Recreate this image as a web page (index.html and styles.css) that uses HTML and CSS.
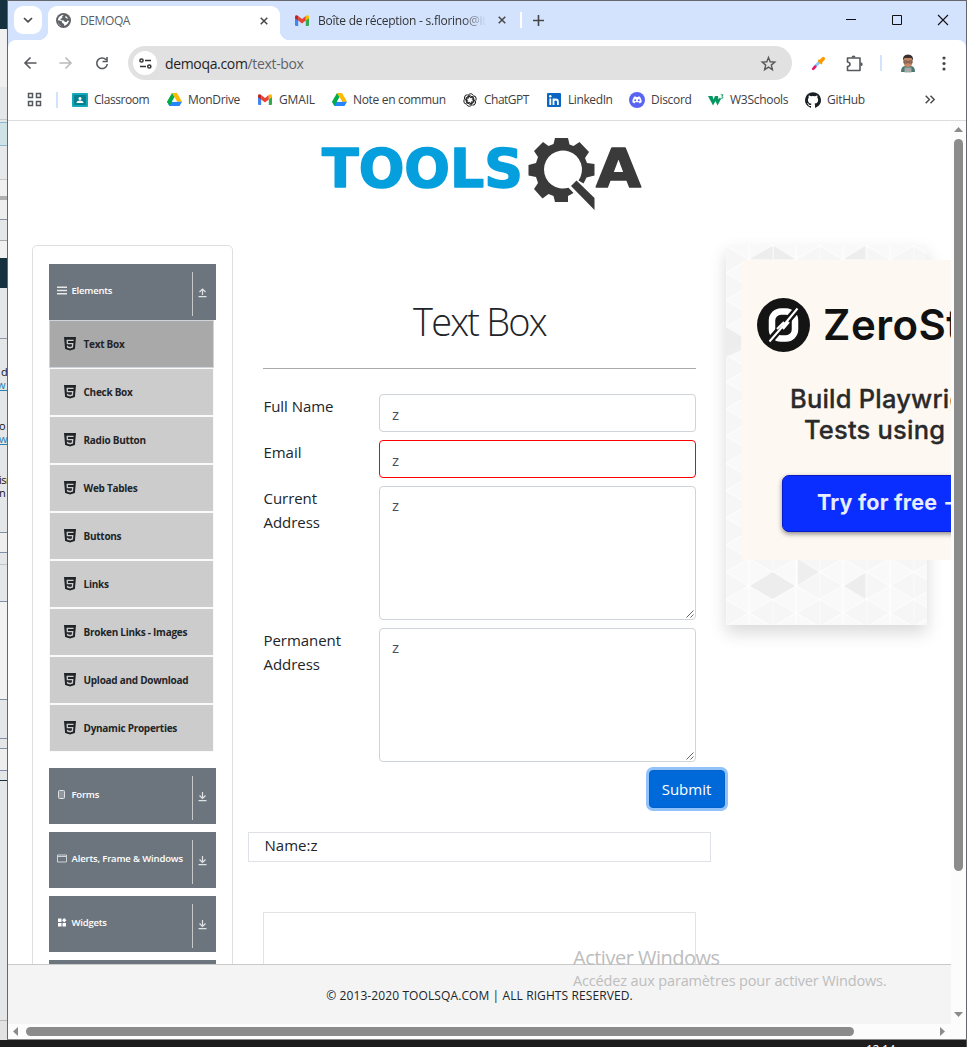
FILE: index.html
```html
<!DOCTYPE html>
<html lang="fr">
<head>
<meta charset="utf-8">
<title>DEMOQA</title>
<link rel="stylesheet" href="styles.css">
</head>
<body>
<svg class="defs" width="0" height="0">
  <defs>
    <symbol id="html5" viewBox="0 0 12 14"><path fill="#212529" d="M0 0h12l-1.1 12L6 13.6 1.1 12z"/><path fill="none" stroke="#ccc" stroke-width="1.300" d="M9.600 3.400H3.200l.2 3.200h5.300l-.3 3.300L6 10.700l-2.400-.8-.1-1.200"/></symbol>
    <symbol id="down" viewBox="0 0 9 10"><path d="M4.500 0v6M1.500 3.500l3 3 3-3M.5 8.700h8" fill="none" stroke="#dfe2e5" stroke-width="1.200"/></symbol>
    <symbol id="up" viewBox="0 0 9 10"><path d="M4.500 7V1.500M1.500 4l3-3 3 3M.5 8.700h8" fill="none" stroke="#dfe2e5" stroke-width="1.200"/></symbol>
    <symbol id="gmail" viewBox="0 0 14 11"><path fill="#4285f4" d="M0 2v8q0 1 1 1h2.200V4.500z"/><path fill="#34a853" d="M14 2v8q0 1-1 1h-2.200V4.500z"/><path fill="#ea4335" d="M3.200 1v4.500L7 8.400l3.800-2.900V1L7 3.900z"/><path fill="#c5221f" d="M0 1.700v1.500l3.200 2.300V1L2.500.5Q.2-.4 0 1.700z"/><path fill="#fbbc04" d="M14 1.700v1.500l-3.200 2.300V1l.7-.5q2.300-.9 2.500 1.200z"/></symbol>
    <symbol id="drive" viewBox="0 0 15 13"><path fill="#ffba00" d="M5 0h5l5 8.700h-5L5 0z"/><path fill="#2684fc" d="M0 8.700h15L12.500 13h-10z"/><path fill="#00ac47" d="M5 0l2.500 4.300L2.500 13 0 8.700z"/><path fill="#fff" d="M7.500 4.300L10 8.700H5z"/></symbol>
    <symbol id="close" viewBox="0 0 8 8"><path d="M.7.7l6.600 6.600M7.300.7L.7 7.300" stroke="#474747" stroke-width="1.500"/></symbol>
    <symbol id="grip" viewBox="0 0 8 8"><path d="M.5 7.500l7-7M4.500 7.500l3-3" stroke="#555" stroke-width=".9"/></symbol>
  </defs>
</svg>
<div class="desktop">
  <div class="behind">
    <span class="frag f1">d</span><span class="frag f2 link">w i</span><span class="frag f3">o</span><span class="frag f4 link">w</span><span class="frag f5">isr</span><span class="frag f6">n</span>
  </div>
  <div class="window">
    <div class="tabstrip">
      <div class="tabsearch"><svg width="10" height="6" viewBox="0 0 10 6"><path d="M1 1l4 3.800L9 1" fill="none" stroke="#474747" stroke-width="1.700"/></svg></div>
      <div class="tab active">
        <svg width="15" height="15" viewBox="0 0 16 16"><circle cx="8" cy="8" r="8" fill="#5f6368"/><path fill="#fff" d="M8.500 1.800l-2 2 .2 1.500-2.200 1.200 1 1.200 2.800.2 1.200 1.600h2l.5-1.500 2 .5Q13 12 9 13.800l-.5-2-2-1.500-.3-1.500L2 7.500Q1.500 12 6 14.200 1.800 13 1.900 8 2.500 2.500 8.500 1.800zM10.500 3l2.700 3-2.200-.3-1.300-1.200z"/></svg>
        <span class="tabtitle t1">DEMOQA</span>
        <svg class="x" width="8" height="8"><use href="#close"/></svg>
      </div>
      <div class="tab second">
        <svg width="14" height="11"><use href="#gmail"/></svg>
        <span class="tabtitle t2">Boîte de réception - s.florino@it</span>
        <svg class="x" width="8" height="8"><use href="#close"/></svg>
      </div>
      <span class="tabsep"></span>
      <svg class="plus" width="11" height="11" viewBox="0 0 11 11"><path d="M5.500 0v11M0 5.500h11" stroke="#474747" stroke-width="1.600"/></svg>
      <svg class="controls" width="104" height="12" viewBox="0 0 104 12"><path d="M0 5.500h10M92 1l10 10M102 1l-10 10" stroke="#111" stroke-width="1.100"/><path d="M46.500 1.500h9v9h-9z" fill="none" stroke="#111"/></svg>
    </div>
    <div class="toolbar">
      <svg class="nav" width="86" height="14" viewBox="0 0 86 14"><path d="M13.500 7H2M7.500 1.500L2 7 7.500 12.500" fill="none" stroke="#55585c" stroke-width="1.600"/><path d="M36.500 7H48M42.500 1.500L48 7 42.500 12.500" fill="none" stroke="#bbb" stroke-width="1.600"/><path d="M83 3.700A5.300 5.300 0 1 0 84.300 8M84 1v4.500h-4.500" fill="none" stroke="#55585c" stroke-width="1.600"/></svg>
      <div class="omnibox">
        <span class="siteinfo"><svg width="13" height="11" viewBox="0 0 13 11"><g fill="none" stroke="#333" stroke-width="1.500"><circle cx="2.500" cy="2.500" r="1.600"/><path d="M6 2.500h6M1 8.500h6"/><circle cx="10.300" cy="8.500" r="1.600"/></g></svg></span>
        <span class="url">demoqa.com<i>/text-box</i></span>
        <svg class="star" width="15" height="15" viewBox="0 0 15 15"><path d="M7.500 1.500l1.700 4.300 4.600.3-3.500 3 1.100 4.500-3.900-2.500-3.900 2.500 1.100-4.500-3.500-3 4.600-.3z" fill="none" stroke="#5a5a5a" stroke-width="1.400"/></svg>
      </div>
      <svg class="picker" width="15" height="15" viewBox="0 0 15 15"><path d="M9.500 5L3 11.500" stroke="#8ac9f7" stroke-width="2.800"/><path d="M4.300 10.700L2.200 12.800" stroke="#f0136b" stroke-width="2.600" stroke-linecap="round"/><path d="M7.300 4l3.700 3.700" stroke="#f90" stroke-width="2"/><path d="M9.500 5.500L12.300 2.700" stroke="#f90" stroke-width="3.600" stroke-linecap="round"/></svg>
      <svg class="puzzle" width="17" height="17" viewBox="0 0 17 17"><path d="M1.500 3H14V15.500H1.500v-4q2.500-.3 2.500-2.200T1.500 7z" fill="none" stroke="#55585c" stroke-width="1.600" stroke-linejoin="round"/><path d="M5.500 2.500q0-2 2-2t2 2zM14.500 7.200q2.200 0 2.200 2t-2.200 2z" fill="#55585c"/></svg>
      <span class="toolsep"></span>
      <svg class="avatar" width="16" height="19" viewBox="0 0 16 19"><path d="M1 18q0-6 4-6h6q4 0 4 6z" fill="#4d7770"/><path d="M3.500 4h9v4q0 5-4.500 5T3.500 8z" fill="#c58766"/><path d="M3.200 7Q2 .5 8 .5T12.800 7L11.500 4h-7z" fill="#3b302e"/><path d="M4 7h3.200v2H4zM8.800 7H12v2H8.800z" fill="none" stroke="#5d4a48" stroke-width=".8"/><path d="M4.500 13.500h7v5h-7z" fill="#9caaa9"/><circle cx="8" cy="16" r="1" fill="#d2a08a"/></svg>
      <svg class="dots" width="4" height="15" viewBox="0 0 4 15"><g fill="#474747"><circle cx="2" cy="2" r="1.600"/><circle cx="2" cy="7.500" r="1.600"/><circle cx="2" cy="13" r="1.600"/></g></svg>
    </div>
    <div class="bookmarks">
      <svg class="apps" width="15" height="15" viewBox="0 0 15 15"><path d="M1.500 1.500h4v4h-4zM9.500 1.500h4v4h-4zM1.500 9.500h4v4h-4zM9.500 9.500h4v4h-4z" fill="none" stroke="#55585c" stroke-width="1.500"/></svg>
      <span class="bmsep"></span>
      <div class="bm b1"><svg width="16" height="14" viewBox="0 0 16 14"><rect width="16" height="14" rx="1" fill="#12a8b8"/><rect x="2" y="2" width="12" height="10" fill="#087f91"/><circle cx="8" cy="5.500" r="1.500" fill="#fff"/><path d="M4.500 10q0-2.500 3.500-2.500t3.500 2.500z" fill="#fff"/></svg><span>Classroom</span></div>
      <div class="bm b2"><svg width="15" height="13"><use href="#drive"/></svg><span>MonDrive</span></div>
      <div class="bm b3"><svg width="14" height="11"><use href="#gmail"/></svg><span>GMAIL</span></div>
      <div class="bm b4"><svg width="15" height="13"><use href="#drive"/></svg><span>Note en commun</span></div>
      <div class="bm b5"><svg width="14" height="14" viewBox="0 0 14 14"><g fill="none" stroke="#222" stroke-width="1"><path id="petal" d="M5 6V3.200Q5.300.8 7.500.7q2 0 2.800 1.600M5 4.500L7.500 3l3.500 2"/><use href="#petal" transform="rotate(60 7 7)"/><use href="#petal" transform="rotate(120 7 7)"/><use href="#petal" transform="rotate(180 7 7)"/><use href="#petal" transform="rotate(240 7 7)"/><use href="#petal" transform="rotate(300 7 7)"/></g></svg><span>ChatGPT</span></div>
      <div class="bm b6"><svg width="14" height="14" viewBox="0 0 14 14"><rect width="14" height="14" rx="1" fill="#0a66c2"/><circle cx="3.300" cy="3.200" r="1.200" fill="#fff"/><path d="M3.300 5.500V12M6.500 12V5.500M6.500 8.500q0-2 2.200-2t2.200 2.200V12" fill="none" stroke="#fff" stroke-width="1.800"/></svg><span>LinkedIn</span></div>
      <div class="bm b7"><svg width="16" height="16" viewBox="0 0 16 16"><circle cx="8" cy="8" r="8" fill="#5865f2"/><path d="M5 4.700l1.500-.5.400.8h2.200l.4-.8 1.500.5q1.800 2.800 1.600 5.500l-2 1.200-.7-1.200H6.100l-.7 1.200-2-1.200Q3.200 7.500 5 4.700z" fill="#fff"/><circle cx="6.200" cy="8.200" r="1" fill="#5865f2"/><circle cx="9.800" cy="8.200" r="1" fill="#5865f2"/></svg><span>Discord</span></div>
      <div class="bm b8"><svg width="16" height="12" viewBox="0 0 16 12"><path d="M0 2h4.500l1 3.500L7 2h3l.5 3.500L12 3.500l1 1.500-3.500 6.500L7.500 7 5 11.500z" fill="#059862"/><path d="M12.800.8h2.300l-1.300 1.500q1.500.4 1 1.500-.6.900-1.800.400" fill="none" stroke="#059862" stroke-width=".9"/></svg><span>W3Schools</span></div>
      <div class="bm b9"><svg width="16" height="16" viewBox="0 0 16 16"><path fill="#1b1f23" d="M8 .2a8 8 0 0 0-2.530 15.590c.4.070.55-.17.550-.38v-1.490c-2.010.37-2.530-.49-2.690-.94-.09-.23-.48-.94-.82-1.130-.28-.15-.68-.52-.01-.53.63-.01 1.080.58 1.230.82.72 1.210 1.870.87 2.330.66.070-.52.280-.87.510-1.070-1.780-.2-3.640-.89-3.640-3.950 0-.87.310-1.590.82-2.150-.08-.2-.36-1.020.080-2.120 0 0 .670-.21 2.200.82a7.400 7.400 0 0 1 4 0c1.530-1.040 2.200-.82 2.200-.82.440 1.100.160 1.920.080 2.120.510.560.820 1.270.820 2.150 0 3.070-1.870 3.750-3.650 3.950.290.250.540.730.540 1.480v2.200c0 .21.150.46.550.38A8 8 0 0 0 8 .2z"/></svg><span>GitHub</span></div>
      <svg class="more" width="10" height="9" viewBox="0 0 10 9"><path d="M.7.700l3.700 3.800L.7 8.300M5.500.7l3.700 3.800-3.700 3.800" fill="none" stroke="#474747" stroke-width="1.400"/></svg>
    </div>
    <div class="viewrow">
      <div class="page">
        <header class="logo">
          <svg width="324" height="76" viewBox="0 0 324 76">
            <text class="tools" x="2" y="50.500" textLength="201" lengthAdjust="spacingAndGlyphs">TOOLS</text>
            <g fill="#3a3a3a" transform="translate(241.500 34)">
              <path fill-rule="evenodd" d="M-6.500-32H6.500L8-25.500 12-24l6-4L27.500-18 23.500-12l2 5L33-6V5.500L25 7.500l-3 6-5-3A19 19 0 1 0 7 17.700L12 23 6.500 26V32H-6.500L-8 26-13 24l-6 4.500L-27.500 19-23.500 13-25.500 7-33 5.500V-5L-25.500-7-23.500-13-27.500-19-18.500-28-13-24-8-26z"/>
              <path d="M9.500 16L15 10.500 33 28V40z"/>
            </g>
            <text class="qa" x="276" y="50.500" textLength="45" lengthAdjust="spacingAndGlyphs">A</text>
          </svg>
        </header>
        <div class="columns">
          <nav class="sidebar">
            <div class="group first"><svg width="10" height="9" viewBox="0 0 10 9"><path d="M0 1.200h10M0 4.500h10M0 7.800h10" stroke="#e6e8ea" stroke-width="1.500"/></svg><span>Elements</span><i class="toggle"><svg width="9" height="10"><use href="#up"/></svg></i></div>
            <ul class="items">
              <li class="sel"><svg width="12" height="14"><use href="#html5"/></svg><span>Text Box</span></li>
              <li><svg width="12" height="14"><use href="#html5"/></svg><span>Check Box</span></li>
              <li><svg width="12" height="14"><use href="#html5"/></svg><span>Radio Button</span></li>
              <li><svg width="12" height="14"><use href="#html5"/></svg><span>Web Tables</span></li>
              <li><svg width="12" height="14"><use href="#html5"/></svg><span>Buttons</span></li>
              <li><svg width="12" height="14"><use href="#html5"/></svg><span>Links</span></li>
              <li><svg width="12" height="14"><use href="#html5"/></svg><span>Broken Links - Images</span></li>
              <li><svg width="12" height="14"><use href="#html5"/></svg><span>Upload and Download</span></li>
              <li><svg width="12" height="14"><use href="#html5"/></svg><span>Dynamic Properties</span></li>
            </ul>
            <div class="group"><svg width="10" height="9" viewBox="0 0 10 9"><rect x="1.500" y=".5" width="6" height="8" rx="1" fill="#8f969d" stroke="#dfe2e5"/></svg><span>Forms</span><i class="toggle"><svg width="9" height="10"><use href="#down"/></svg></i></div>
            <div class="group"><svg width="10" height="9" viewBox="0 0 10 9"><path d="M.5 1h9v7h-9zM.5 2.500h9" fill="none" stroke="#cfd3d6"/></svg><span class="alerts">Alerts, Frame &amp; Windows</span><i class="toggle"><svg width="9" height="10"><use href="#down"/></svg></i></div>
            <div class="group"><svg width="10" height="9" viewBox="0 0 10 9"><path d="M1 .5h3.500v3.500H1zM1 5h3.500v3.500H1zM5.500 5H9v3.500H5.500zM7.200 0L9.500 2.200 7.200 4.500 5 2.200z" fill="#fff"/></svg><span>Widgets</span><i class="toggle"><svg width="9" height="10"><use href="#down"/></svg></i></div>
            <div class="group"></div>
          </nav>
          <main class="content">
            <h1>Text Box</h1>
            <form class="form">
              <div class="row"><label>Full Name</label><div class="field">z</div></div>
              <div class="row"><label>Email</label><div class="field error">z</div></div>
              <div class="row"><label>Current<br>Address</label><div class="field area">z<svg width="8" height="8"><use href="#grip"/></svg></div></div>
              <div class="row"><label>Permanent<br>Address</label><div class="field area">z<svg width="8" height="8"><use href="#grip"/></svg></div></div>
            </form>
            <div class="submitrow"><button class="submit" type="button">Submit</button></div>
            <div class="output">Name:z</div>
            <div class="adslot"></div>
          </main>
          <aside class="promo">
            <svg class="tiles" width="201" height="380"><defs><pattern id="tri" width="47" height="27.200" patternUnits="userSpaceOnUse" patternTransform="translate(-.5 .8)"><path fill="#f9f9f9" d="M0 0h47v27.200H0z"/><path d="M0 0l23.500 13.600L0 27.200zM47 0v27.200L23.500 13.600z" fill="#f6f6f6"/><path d="M0 0l47 27.200M47 0L0 27.200M0 0v27.200M23.500 0v27.200" fill="none" stroke="#fff" stroke-width="1"/></pattern></defs><rect width="201" height="380" fill="url(#tri)"/><path d="M24 341l22.500-14 22.500 14-22.500 13zM0 82l15 9v14L0 112zM24 13.500L46.500 1v13.500zM48 1l21 13H48zM118 14l21-13v13zM118 341l21-13v26zM72 314v26l21-13z" fill="#e9e9e9" opacity=".75"/></svg>
            <div class="ad">
              <div class="brand"><svg width="53" height="54" viewBox="0 0 53 54"><ellipse cx="26.500" cy="27" rx="26.500" ry="27" fill="#141414"/><rect x="15" y="13.500" width="23" height="27" rx="9" fill="none" stroke="#fff" stroke-width="6.500"/><path d="M10 46L43 8" stroke="#141414" stroke-width="7"/><path d="M12.500 43.500L26 28M26 28L40.500 10.500M20 31l7-7M26 31l6-7" stroke="#fff" stroke-width="2"/></svg><b>ZeroStep</b></div>
              <p class="l1">Build Playwright</p>
              <p class="l2">Tests using AI</p>
              <div class="cta">Try for free →</div>
            </div>
          </aside>
        </div>
        <footer class="foot">© 2013-2020 TOOLSQA.COM | ALL RIGHTS RESERVED.</footer>
      </div>
      <div class="vscroll"><svg width="9" height="5" viewBox="0 0 9 5"><path d="M0 5L4.500 0 9 5z" fill="#8b8b8b"/></svg><span class="vthumb"></span><svg width="9" height="5" viewBox="0 0 9 5"><path d="M0 0h9L4.500 5z" fill="#8b8b8b"/></svg></div>
    </div>
    <div class="hscroll"><svg width="5" height="9" viewBox="0 0 5 9"><path d="M5 0v9L0 4.500z" fill="#8b8b8b"/></svg><span class="hthumb"></span><svg class="right" width="5" height="9" viewBox="0 0 5 9"><path d="M0 0v9l5-4.500z" fill="#8b8b8b"/></svg></div>
  </div>
  <div class="taskbar"><span>12:14</span></div>
  <div class="watermark"><div class="w1">Activer Windows</div><div class="w2">Accédez aux paramètres pour activer Windows.</div></div>
</div>
</body>
</html>
```

FILE: styles.css
```css
* { box-sizing: border-box; }
body { margin: 0; background: #fff; color: #212529; font-family: "Open Sans", "Noto Sans", sans-serif; }
svg { display: block; flex: none; overflow: visible; }
.defs { position: absolute; }
i { font-style: normal; }
p, h1, ul { margin: 0; padding: 0; list-style: none; }

.desktop { position: relative; display: grid; grid-template: 1040px 7px / 7px 960px; width: 974px; height: 1047px; overflow: hidden; }
.behind { position: relative; overflow: hidden; font-size: 11px; line-height: 12px; color: #111;
  background: linear-gradient(#15303f 29px, #f0f0f0 29px 87px, #e4e6e8 87px 119px, #c8c8c8 119px 120px, #e4e6e8 120px 122px, #8db8d2 122px 123px, #cfe3e6 123px 145px, #8db8d2 145px 146px, #e6e8ea 146px 179px, #c8c8c8 179px 180px, #f0f0f0 180px 196px, #b0b0b0 196px 200px, #eee 200px 219px, #88909c 219px 220px, #e4e6e8 220px 240px, #aaa 240px 241px, #f0f0f0 241px 258px, #15303f 258px 288px, #e4e6e8 288px 338px, #8e99ac 338px 339px, #e4e6e8 339px 532px, #8090a8 532px 533px, #eee 533px 552px, #8090a8 552px 553px, #e4e6e8 553px 564px, #c4c4c4 564px 565px, #e4e6e8 565px 601px, #8090a8 601px 602px, #f2f2f2 602px 699px, #8090a8 699px 700px, #e4e6e8 700px 738px, #8090a8 738px 739px, #e4e6e8 739px 748px, #8090a8 748px 749px, #eee 749px 770px, #8090a8 770px 771px, #e4e6e8 771px 780px, #15303f 780px 781px, #e4e6e8 781px 1020px, #b8b8b8 1020px 1021px, #e2e2e2 1021px); }
.frag { position: absolute; white-space: nowrap; }
.link { color: #2c7fae; text-decoration: underline; }
.f1 { top: 366px; left: 1px; } .f2 { top: 379px; left: -3px; } .f3 { top: 420px; left: -1px; }
.f4 { top: 433px; left: -1px; } .f5 { top: 474px; left: -1px; letter-spacing: -.5px; } .f6 { top: 487px; left: -1px; }

.window { display: flex; flex-direction: column; background: linear-gradient(#d3e3fd 60px, #fff 60px); border: 1px solid #66676c; border-bottom-color: #888; overflow: hidden; }
.tabstrip { display: flex; flex: none; height: 39px; background: #d3e3fd; padding-left: 6px; position: relative; }
.tabsearch { width: 28px; height: 28px; margin-top: 5px; border-radius: 9px; background: #fff; display: grid; place-items: center; }
.tab { display: flex; align-items: center; font-size: 12px; color: #333; }
.active { position: relative; width: 232px; height: 34px; margin: 5px 0 0 6px; padding: 0 12px 5px 8px; background: #fff; border-radius: 9px 9px 0 0; color: #5b5e64; }
.active::before, .active::after { content: ""; position: absolute; bottom: 0; width: 9px; height: 9px; }
.active::before { left: -9px; background: radial-gradient(circle at 0 0, transparent 9px, #fff 9px); }
.active::after { right: -9px; background: radial-gradient(circle at 100% 0, transparent 9px, #fff 9px); }
.tabtitle { white-space: nowrap; margin-left: 9px; }
.t1 { letter-spacing: -.4px; }
.t2 { width: 169px; overflow: hidden; letter-spacing: -.25px; -webkit-mask: linear-gradient(90deg, #000 145px, transparent 168px); mask: linear-gradient(90deg, #000 145px, transparent 168px); }
.x { margin-left: auto; }
.second { width: 228px; margin-left: 15px; padding-right: 17px; height: 38px; }
.tabsep { width: 2px; height: 16px; background: #fff; margin: 11px 0 0 -3px; }
.plus { margin: 14px 0 0 11px; }
.controls { margin: 13px 16px 0 auto; }

.toolbar { display: flex; align-items: center; flex: none; height: 43px; padding: 3px 0 0 15px; border-radius: 8px 8px 0 0; background: #fff; }
.omnibox { display: flex; align-items: center; width: 664px; height: 34px; margin-left: 19px; border-radius: 17px; background: #e1e1e1; padding: 0 16px 0 5px; }
.siteinfo { width: 24px; height: 24px; border-radius: 50%; background: #fff; display: grid; place-items: center; }
.url { margin-left: 8px; font-size: 14px; letter-spacing: -.34px; color: #1f1f1f; }
.url i { color: #5f6368; }
.star { margin-left: auto; }
.picker { margin-left: 19px; }
.puzzle { margin-left: 20px; }
.toolsep { width: 2px; height: 16px; background: #d3e3fd; margin-left: 17px; }
.avatar { margin-left: 18px; }
.dots { margin-left: 26px; }

.bookmarks { display: flex; align-items: center; flex: none; height: 38px; padding-bottom: 4px; border-bottom: 1px solid #dadce0; background: #fff; font-size: 12px; color: #3c4043; }
.apps { margin-left: 18.500px; }
.bmsep { width: 2px; height: 16px; background: #d3e3fd; margin: 0 14px 0 14.500px; }
.bm { display: flex; align-items: center; flex: none; white-space: nowrap; letter-spacing: -.15px; }
.bm span { margin-left: 7px; }
.b1 { width: 95px; } .b1 span { margin-left: 6px; letter-spacing: -.45px; }
.b2 { width: 91px; } .b2 span { margin-left: 6px; letter-spacing: -.35px; }
.b3 { width: 74px; } .b4 { width: 131px; } .b4 span { margin-left: 6px; letter-spacing: -.33px; }
.b5 { width: 84px; letter-spacing: -.5px; } .b6 { width: 82px; letter-spacing: -.4px; }
.b7 { width: 79px; letter-spacing: -.3px; } .b7 span, .b8 span, .b9 span { margin-left: 6px; } .b8 { width: 97px; letter-spacing: -.28px; } .b9 { width: 120px; letter-spacing: -.3px; }

.viewrow { display: flex; flex: none; height: 903px; background: #fff; }
.page { position: relative; width: 943px; height: 903px; overflow: hidden; }
.logo { height: 124px; padding: 15px 0 0 312px; }
.logo text { font-family: "DejaVu Sans", sans-serif; font-weight: 700; font-size: 53px; stroke-width: 1.500px; stroke-linejoin: round; }
.tools { fill: #069fdd; stroke: #069fdd; }
.qa { fill: #3a3a3a; stroke: #3a3a3a; }
.columns { display: flex; gap: 15px; padding-left: 24px; align-items: flex-start; }
.sidebar { flex: none; width: 201px; height: 800px; border: 1px solid #dfdfdf; border-radius: 5px; padding: 18px 16px 0; }
.group { display: flex; align-items: center; position: relative; width: 167px; height: 56px; margin-bottom: 8px; padding: 0 0 3px 8px; background: #6c757d; color: #fff; font-size: 9.500px; font-weight: 600; letter-spacing: -.2px; white-space: nowrap; }
.group span { margin-left: 4.500px; }
.group .alerts { letter-spacing: -.15px; }
.first { margin-bottom: 0; }
.toggle { position: absolute; left: 143px; top: 8px; height: 44px; border-left: 1px solid #c8c8c8; padding: 16px 0 0 5px; }
.items { padding-bottom: 16px; }
.items li { display: flex; align-items: center; width: 165px; height: 48px; border: 1px solid #f8f9fa; background: #ccc; padding: 0 0 1px 14px; font-size: 10px; font-weight: 700; letter-spacing: -.27px; }
.items .sel { background: #a9a9a9; border-color: #ced4da; }
.items span { margin-left: 7.500px; }

.content { flex: none; width: 463px; padding: 50px 15px 0; font-size: 15px; }
h1 { text-align: center; font-size: 38px; font-weight: 300; line-height: 52px; height: 74px; letter-spacing: -1.800px; border-bottom: 1px solid #aaa; margin-bottom: 25px; }
.form { display: grid; gap: 8px; }
.row { display: flex; justify-content: space-between; }
label { line-height: 24px; color: #212529; letter-spacing: -.05px; padding-left: .5px; }
.field { position: relative; width: 317px; height: 38px; border: 1px solid #ced4da; border-radius: 4px; padding: 8px 12px 0; line-height: 22px; color: #495057; }
.error { border-color: #f00; }
.area { height: 134px; padding-top: 7px; }
.area svg { position: absolute; right: 1px; bottom: 1px; }
.submitrow { display: flex; justify-content: flex-end; margin: 8px -29px 0 0; }
.submit { width: 76px; height: 38px; border: 1px solid #0062cc; border-radius: 4px; background: #0069d9; box-shadow: 0 0 0 3px #91c2fa; color: #fff; font: 15px/22px "Open Sans", sans-serif; padding: 0 1px 1px 0; }
.output { margin: 24px -15px 0; height: 30px; border: 1px solid #dee2e6; padding-left: 15.500px; line-height: 24px; }
.adslot { margin-top: 50px; height: 100px; border: 1px solid #e2e3e5; }

.promo { position: relative; flex: none; width: 201px; height: 380px; padding: 15px 0 0 16px; box-shadow: 0 8px 16px rgba(0,0,0,.15); }
.tiles { position: absolute; left: 0; top: 0; }
.ad { position: relative; width: 300px; height: 300px; background: #fdf8f2; font-family: Inter, sans-serif; color: #2a2a2a; padding: 38px 0 0 15px; }
.brand { display: flex; align-items: center; }
.brand b { font-size: 42px; font-weight: 600; line-height: 54px; margin-left: 13px; color: #111; letter-spacing: .5px; }
.ad p { font-size: 25.500px; line-height: 31px; font-weight: 500; white-space: nowrap; letter-spacing: .2px; -webkit-text-stroke: .3px #2a2a2a; }
.ad .l1 { margin: 31px 0 0 33px; }
.ad .l2 { margin-left: 47px; }
.cta { margin: 30px 0 0 25px; width: 235px; height: 57px; border: 1px solid #0a1cc8; border-radius: 7px; background: #0a2eff; box-shadow: 0 2px 5px rgba(0,0,0,.45); color: #e7ecff; font-size: 21.500px; font-weight: 700; letter-spacing: .2px; line-height: 53px; padding-left: 34px; white-space: nowrap; }

.foot { position: absolute; left: 0; bottom: 0; width: 943px; height: 60px; background: #f4f4f4; border-top: 1px solid #c9c9c9; text-align: center; font-size: 12px; line-height: 61px; color: #212529; letter-spacing: .1px; }
.vscroll { width: 15px; background: #fcfcfc; display: flex; flex-direction: column; align-items: center; padding: 6px 0 7px; justify-content: space-between; }
.vthumb { width: 9px; height: 732px; border-radius: 5px; background: #8b8b8b; margin: 7px 0 auto; }
.hscroll { display: flex; align-items: center; height: 15px; background: #fcfcfc; padding: 0 21px 0 5px; }
.hthumb { width: 828px; height: 9px; border-radius: 5px; background: #8b8b8b; margin-left: 8px; }
.right { margin-left: auto; }
.taskbar { grid-column: 1 / 3; background: #1d1d1d; border-right: 1px solid #555; color: #fff; overflow: hidden; font-size: 12px; }
.taskbar span { display: block; margin: 2px 0 0 866px; line-height: 16px; letter-spacing: -.3px; }
.watermark { position: absolute; left: 573px; top: 944px; color: #bdbdbd; white-space: nowrap; }
.w1 { font-size: 20px; line-height: 27px; letter-spacing: -.5px; }
.w2 { font-size: 14.500px; line-height: 20px; letter-spacing: -.15px; }
```
